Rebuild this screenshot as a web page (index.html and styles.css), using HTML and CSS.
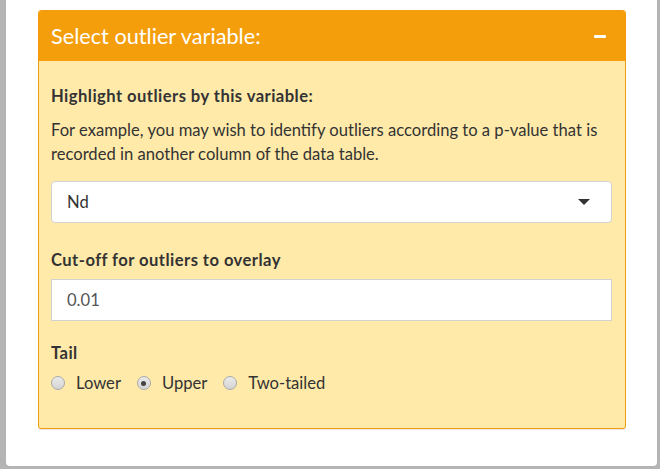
FILE: index.html
```html
<!DOCTYPE html>
<html>
<head>
<meta charset="utf-8">
<link rel="stylesheet" href="styles.css">
</head>
<body>
<div class="panel">
  <div class="box">
    <div class="box-header">
      <span class="box-title">Select outlier variable:</span>
      <span class="minus"></span>
    </div>
    <div class="box-body">
      <div class="label l1">Highlight outliers by this variable:</div>
      <p class="help">For example, you may wish to identify outliers according to a p-value that is recorded in another column of the data table.</p>
      <div class="select"><span>Nd</span><span class="caret"></span></div>
      <div class="label l2">Cut-off for outliers to overlay</div>
      <div class="input">0.01</div>
      <div class="label l3">Tail</div>
      <div class="radios">
        <span class="radio"><span class="dot"></span>Lower</span>
        <span class="radio"><span class="dot checked"></span>Upper</span>
        <span class="radio"><span class="dot"></span>Two-tailed</span>
      </div>
    </div>
  </div>
</div>
</body>
</html>
```
FILE: styles.css
```css
html, body {
  margin: 0;
  padding: 0;
}
body {
  background: #b4b4b4;
  width: 660px;
  height: 469px;
  overflow: hidden;
  font-family: "Source Sans Pro", Lato, "Liberation Sans", sans-serif;
  color: #333;
}
.panel {
  margin-left: 6px;
  width: 651px;
  height: 466px;
  background: #fff;
  border-radius: 0 0 4px 4px;
  padding: 10px 0 0 32px;
  box-sizing: border-box;
}
.box {
  width: 588px;
  height: 419px;
  box-sizing: border-box;
  border: 1px solid #f39c12;
  border-radius: 3px;
  background: #ffeaa9;
  box-shadow: 0 1px 1px rgba(0,0,0,0.1);
  overflow: hidden;
}
.box-header {
  background: #f49e0c;
  height: 51px;
  margin: -1px -1px 0 -1px;
  padding: 0 20px 0 13px;
  display: flex;
  align-items: center;
  justify-content: space-between;
  color: #fff;
}
.box-title {
  font-size: 21.7px;
  line-height: 26px;
}
.minus {
  width: 12px;
  height: 3px;
  background: #fff;
  border-radius: 1px;
  margin-top: 1px;
}
.box-body {
  padding: 0 13px 0 12px;
  display: flex;
  flex-direction: column;
  font-size: 16.6px;
  line-height: 24px;
}
.label {
  font-weight: bold;
  letter-spacing: 0.45px;
}
.l1 { margin-top: 23px; }
.help { margin: 10px 0 0 0; }
.select {
  margin-top: 15px;
  height: 42px;
  box-sizing: border-box;
  border: 1px solid #d2d2d2;
  border-radius: 4px;
  background: #fff;
  display: flex;
  align-items: center;
  justify-content: space-between;
  padding: 0 21px 0 15px;
}
.caret {
  width: 0;
  height: 0;
  border-left: 6px solid transparent;
  border-right: 6px solid transparent;
  border-top: 6px solid #333;
}
.l2 { margin-top: 25px; }
.input {
  margin-top: 7px;
  height: 42px;
  box-sizing: border-box;
  border: 1px solid #d2d2d2;
  background: #fff;
  display: flex;
  align-items: center;
  padding: 0 15px;
  color: #555;
}
.l3 { margin-top: 20px; }
.radios {
  display: flex;
  gap: 16px;
  margin-top: 6px;
}
.radio {
  display: flex;
  align-items: center;
  color: #333;
}
.dot {
  width: 14px;
  height: 14px;
  box-sizing: border-box;
  border-radius: 50%;
  border: 1px solid #a9a9a9;
  background: linear-gradient(#eaeaea, #d4d4d4);
  margin-right: 11px;
  display: flex;
  align-items: center;
  justify-content: center;
}
.dot.checked::after {
  content: "";
  width: 5px;
  height: 5px;
  border-radius: 50%;
  background: #444;
}
```
